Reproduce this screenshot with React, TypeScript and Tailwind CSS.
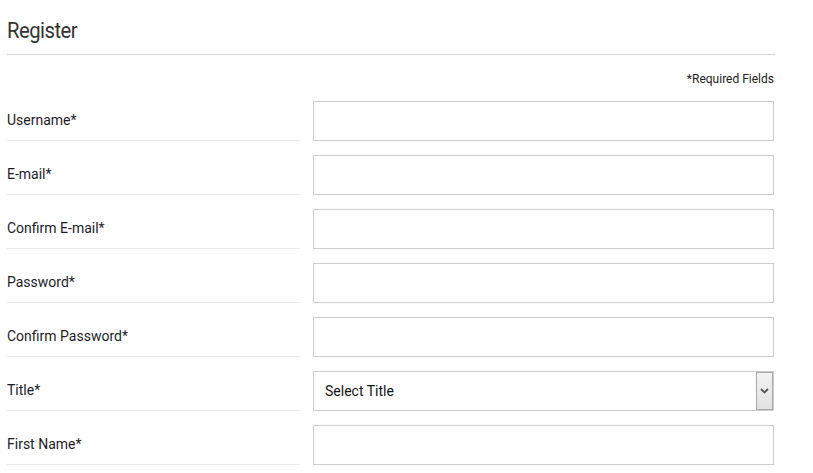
const fields = [
  { label: 'Username*', type: 'text' },
  { label: 'E-mail*', type: 'text' },
  { label: 'Confirm E-mail*', type: 'text' },
  { label: 'Password*', type: 'password' },
  { label: 'Confirm Password*', type: 'password' },
  { label: 'Title*', type: 'select' },
  { label: 'First Name*', type: 'text' },
];

function TitleSelect() {
  return (
    <div className="relative w-[461px] h-10 border border-[#cccccc] bg-white flex items-center">
      <span className="pl-[11px] text-[14px] text-[#111111]">Select Title</span>
      <div className="absolute right-0 top-0 bottom-0 w-[17px] border border-[#a9a9a9] bg-gradient-to-b from-[#f2f2f2] to-[#e2e2e2] flex items-center justify-center">
        <svg width="9" height="6" viewBox="0 0 9 6">
          <path d="M1 1 L4.5 4.5 L8 1" fill="none" stroke="#555555" strokeWidth="1.8" />
        </svg>
      </div>
    </div>
  );
}

export default function App() {
  return (
    <div className="w-[813px] h-[473px] overflow-hidden bg-white font-['Roboto',sans-serif] text-[#1c1c28]">
      <div className="w-[768px] ml-[7px]">
        <div className="h-[55px] border-b border-[#d4d4d4] flex items-end pb-[12px]">
          <h1 className="text-[22px] leading-none text-[#333333] origin-left scale-x-[0.92] tracking-tight">Register</h1>
        </div>
        <div className="mt-[16px] text-right text-[12px] leading-4 text-[#222222] pr-px">*Required Fields</div>
        <div className="mt-[14px] flex flex-col gap-[14px]">
          {fields.map((f) => (
            <div key={f.label} className="flex flex-row items-stretch">
              <div className="w-[293px] h-10 border-b border-[#ebebeb] flex items-center text-[14px]">
                {f.label}
              </div>
              <div className="ml-[13px]">
                {f.type === 'select' ? (
                  <TitleSelect />
                ) : (
                  <input
                    type={f.type}
                    className="w-[461px] h-10 border border-[#cccccc] bg-white px-2 outline-none"
                  />
                )}
              </div>
            </div>
          ))}
        </div>
      </div>
    </div>
  );
}
